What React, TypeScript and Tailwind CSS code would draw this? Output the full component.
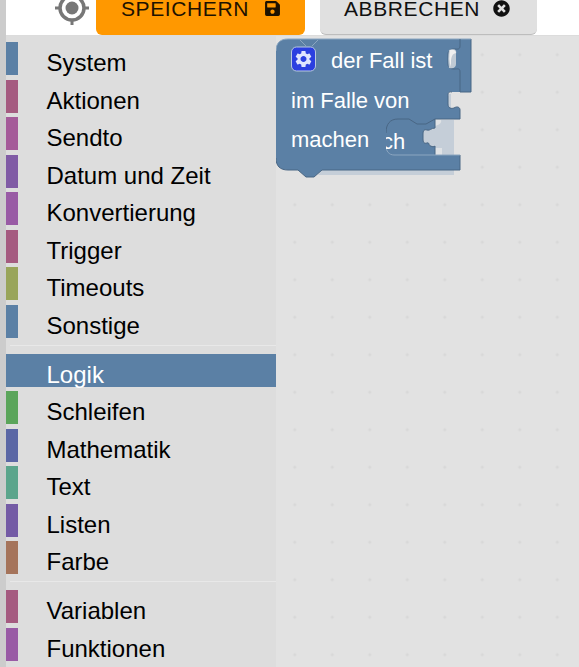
import { FaSave, FaTimesCircle } from 'react-icons/fa';
import { MdSettings } from 'react-icons/md';

const groups = [
    [
        { name: 'System', color: 'bg-[#5b80a5]' },
        { name: 'Aktionen', color: 'bg-[#a55b80]' },
        { name: 'Sendto', color: 'bg-[#a55b99]' },
        { name: 'Datum und Zeit', color: 'bg-[#805ba5]' },
        { name: 'Konvertierung', color: 'bg-[#995ba5]' },
        { name: 'Trigger', color: 'bg-[#a55b80]' },
        { name: 'Timeouts', color: 'bg-[#99a55b]' },
        { name: 'Sonstige', color: 'bg-[#5b80a5]' },
    ],
    [
        { name: 'Logik', color: 'bg-[#5b80a5]', selected: true },
        { name: 'Schleifen', color: 'bg-[#5ba55b]' },
        { name: 'Mathematik', color: 'bg-[#5b67a5]' },
        { name: 'Text', color: 'bg-[#5ba58c]' },
        { name: 'Listen', color: 'bg-[#745ba5]' },
        { name: 'Farbe', color: 'bg-[#a5745b]' },
    ],
    [
        { name: 'Variablen', color: 'bg-[#a55b80]' },
        { name: 'Funktionen', color: 'bg-[#995ba5]' },
    ],
];

const Category = ({ name, color, selected }: { name: string; color: string; selected?: boolean }) => (
    <div className={`flex h-[33px] mb-[4.5px] ${selected ? 'bg-[#5b80a5] text-white' : 'text-black'}`}>
        <span className={`w-3 h-full ${color}`} />
        <span className="ml-[28.5px] pt-[9px] leading-[24px]">{name}</span>
    </div>
);

const BlockDrawing = () => (
    <svg width="200" height="145" viewBox="0 0 200 145" className="absolute left-0 top-[2px]" fontFamily="Liberation Sans, Arial, sans-serif">
        {/* shadow */}
        <path d="M146 82h32v36h-32zM46 132h132v5H42z" fill="#c5ced8" />
        <path d="M159 82h6c1 3-2 5-6 6zM159 110h7v7h-7z" fill="#dfe2e5" />
        <path d="M172 56h3v14h-3z" fill="#c5ced8" />
        {/* block */}
        <path
            d="M12 1H195V54H176C172 53 172 56 172 58V66C172 70 175 71 178 70C181 68 184 69 184 72V81H159V90C155 90 154 93 151 92C148 91 147 93 147 96V101C147 104 148 106 151 105C154 104 152 108 155 108C156 109 158 109 159 108V117H184V132H46L38 139H30L22 132H12C4 132 0 128 0 120V13C0 5 4 1 12 1Z"
            fill="#5b80a5"
        />
        <path
            d="M195 1V54H184M176 54C172 53 172 56 172 58V66C172 70 175 71 178 70C181 68 184 69 184 72V81H159M159 81V90C155 90 154 93 151 92C148 91 147 93 147 96V101C147 104 148 106 151 105C154 104 152 108 155 108C156 109 158 109 159 108V117M184 117V132H46L38 139H30L22 132H12C4 132 0 128 0 120"
            fill="none"
            stroke="#496684"
        />
        <path d="M0 13C0 5 4 1 12 1H195M184 117H118" fill="none" stroke="#8ca6c0" />
        {/* hole on the top row */}
        <path d="M184 1V8C184 12 181 11 178 11C174 11 172 13 172 16V26C172 30 175 31 178 31C182 31 184 30 184 34V54" fill="none" stroke="#496684" />
        <path d="M173 12C179 10 181 12 180 16V26C180 29 178 31 173 30C172 24 172 18 173 12Z" fill="#c0cad4" />
        <path d="M174 12C177 11 180 12 180 15C176 16 176 18 175 22V29C173 24 173 18 174 12Z" fill="#f0f0f0" />
        {/* inner block outline */}
        <path d="M110 95C110 86 114 81 122 81H133L141 86H150L159 81" fill="none" stroke="#496684" />
        <path d="M110 108C110 113 113 117 118 117" fill="none" stroke="#8ca6c0" />
        <path d="M24 2L30 8M42 2L36 8" fill="none" stroke="#8ca6c0" />
        {/* gear field */}
        <rect x="15.5" y="9" width="24" height="24" rx="5" fill="#2b3fe0" stroke="#b9c8e0" />
        <MdSettings x="17.5" y="11" size={20} color="#dfe4ff" />
        <g fill="#fff" fontSize="22">
            <text x="106" y="111">ch</text>
            <rect x="96" y="90" width="14" height="26" fill="#5b80a5" />
            <text x="55" y="30">der Fall ist</text>
            <text x="15" y="70">im Falle von</text>
            <text x="15" y="109">machen</text>
        </g>
    </svg>
);

export default function App() {
    return (
        <div className="w-[579px] h-[667px] overflow-hidden flex bg-white font-['Liberation_Sans',Arial,sans-serif]">
            <div className="w-[6px] shrink-0 bg-[#cccccc]" />
            <div className="flex-1 flex flex-col min-w-0">
                <header className="h-9 flex shrink-0 border-b border-[#dcdcdc] overflow-hidden">
                    <div className="w-[90px] flex justify-end">
                        <svg width="36" height="36" viewBox="0 0 36 36" fill="none" className="-mt-[10px] mr-[6px]">
                            <circle cx="18" cy="18" r="12" stroke="#777777" strokeWidth="3.5" />
                            <circle cx="18" cy="18" r="6.5" fill="#777777" />
                            <path d="M18 1v5M18 30v5M1 18h5M30 18h5" stroke="#777777" strokeWidth="3" />
                        </svg>
                    </div>
                    <button className="w-[209px] h-[35px] bg-[#ff9800] rounded-b-[6px] text-[#1d1200] text-[21px] tracking-[0.6px] flex items-start pl-[25px]">
                        <span className="-mt-[3px] leading-[24px]">SPEICHERN</span>
                        <FaSave size={17} className="ml-[15px] mt-0" />
                    </button>
                    <button className="ml-[15px] w-[217px] h-[35px] bg-[#e0e0e0] rounded-b-[6px] text-[#111111] text-[21px] tracking-[0.6px] flex items-start pl-[24px] border-b border-[#bdbdbd]">
                        <span className="-mt-[3px] leading-[24px]">ABBRECHEN</span>
                        <FaTimesCircle size={17} className="ml-[13px] mt-0" />
                    </button>
                </header>
                <div className="flex-1 flex min-h-0">
                    <aside className="w-[270px] shrink-0 bg-[#dddddd]">
                        <nav className="pt-[6px] text-[24px]">
                            {groups.map((group, i) => (
                                <div key={i}>
                                    {i > 0 && (
                                        <div className="pt-[2.75px] pb-[7.75px] pl-[4px]">
                                            <div className="h-px bg-[#e8e8e8]" />
                                        </div>
                                    )}
                                    {group.map((cat) => (
                                        <Category key={cat.name} {...cat} />
                                    ))}
                                </div>
                            ))}
                        </nav>
                    </aside>
                    <main className="relative flex-1 bg-[#e2e2e2] bg-[radial-gradient(circle,#d8d8d8_1.2px,transparent_1.8px)] bg-[length:37.5px_37.5px]">
                        <BlockDrawing />
                    </main>
                </div>
            </div>
        </div>
    );
}
